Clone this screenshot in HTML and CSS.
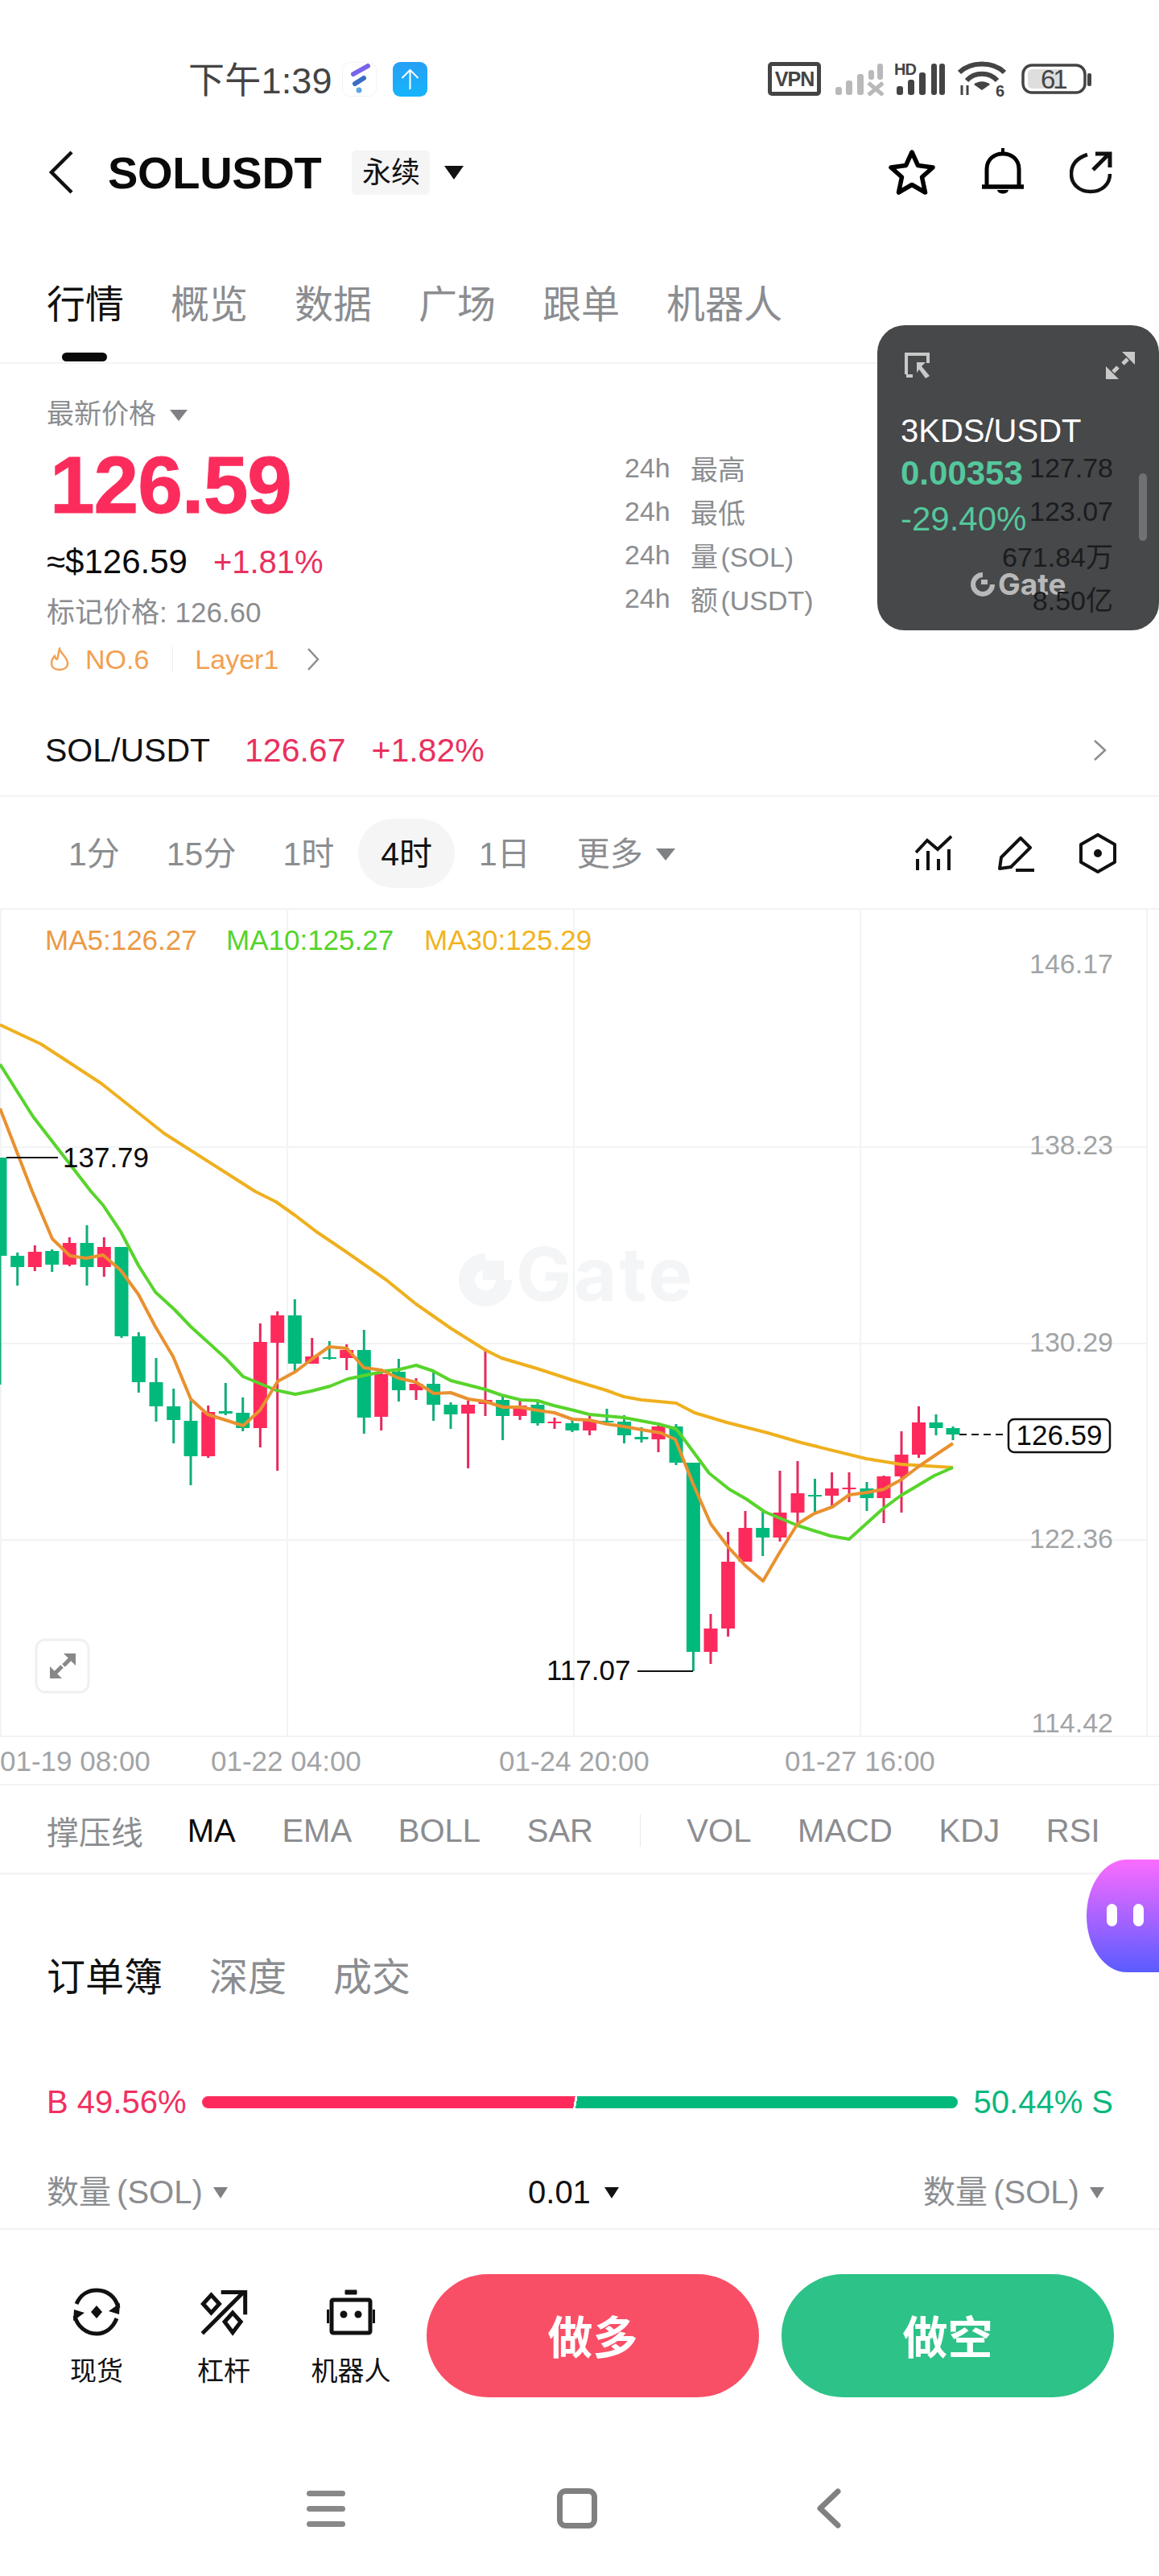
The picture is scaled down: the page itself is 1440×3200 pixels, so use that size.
FILE: index.html
```html
<!DOCTYPE html>
<html lang="zh-CN">
<head>
    <meta charset="UTF-8">
    <meta name="viewport" content="width=device-width, initial-scale=1.0">
    <title>SOLUSDT</title>
    <link rel="stylesheet" href="styles.css">
</head>
<body>
<div class="page">

    <div class="status-bar">
        <span class="clock">下午1:39</span>
        <svg class="app-icon" width="43" height="43" viewBox="0 0 43 43">
            <rect x="0.5" y="0.5" width="42" height="42" rx="9" fill="#fff" stroke="#f2f2f2"/>
            <path d="M14 15 L32 5" stroke="#7a63ea" stroke-width="6" stroke-linecap="round"/>
            <path d="M16 27 L27 20" stroke="#3d6cc4" stroke-width="6" stroke-linecap="round"/>
            <circle cx="21" cy="35" r="3.5" fill="#62a4e4"/>
        </svg>
        <svg class="app-icon second" width="43" height="43" viewBox="0 0 43 43">
            <defs>
                <linearGradient id="blueUp" x1="0" y1="0" x2="0" y2="1">
                    <stop offset="0" stop-color="#26a0f5"/>
                    <stop offset="1" stop-color="#16b4fb"/>
                </linearGradient>
            </defs>
            <rect width="43" height="43" rx="9" fill="url(#blueUp)"/>
            <path d="M21.500 34 V10 M11.500 20 L21.500 10 L31.500 20" fill="none" stroke="#fff" stroke-width="2"/>
        </svg>

        <div class="status-right">
            <span class="vpn">VPN</span>
            <svg class="signal-off" width="60" height="42" viewBox="0 0 60 42" fill="#b9b9b9">
                <rect x="0" y="31" width="8" height="10" rx="3"/>
                <rect x="13" y="23" width="8" height="18" rx="3"/>
                <rect x="27" y="15" width="8" height="26" rx="3"/>
                <rect x="41" y="10" width="7" height="12" rx="3"/>
                <rect x="52" y="2" width="7" height="20" rx="3"/>
                <path d="M41 26 L59 41 M59 26 L41 41" stroke="#b9b9b9" stroke-width="5"/>
            </svg>
            <svg class="signal-hd" width="63" height="46" viewBox="0 -4 63 46" fill="#444">
                <text class="hd-text" x="0" y="16">HD</text>
                <rect x="3" y="30" width="8" height="11" rx="3"/>
                <rect x="17" y="22" width="8" height="19" rx="3"/>
                <rect x="31" y="13" width="8" height="28" rx="3"/>
                <rect x="46" y="2" width="7" height="39" rx="3"/>
                <rect x="56" y="2" width="7" height="39" rx="3"/>
            </svg>
            <svg class="wifi" width="60" height="50" viewBox="0 0 60 50" fill="none" stroke="#444" stroke-width="6">
                <path d="M2 15 C16 1 44 1 58 15"/>
                <path d="M11 25 C21 14 39 14 49 25"/>
                <path d="M30 37 L20 30 C25 25 35 25 40 30 Z" fill="#444" stroke="none"/>
                <path d="M5 31 V43 M12 31 V43" stroke-width="3"/>
                <text class="wifi-six" x="47" y="45">6</text>
            </svg>
            <svg class="battery" width="88" height="38" viewBox="0 0 88 38">
                <rect x="2" y="2" width="77" height="34" rx="11" fill="#fff" stroke="#444" stroke-width="3.500"/>
                <path d="M14 7 H51 V31 H14 C10 31 8 29 8 25 V13 C8 9 10 7 14 7 Z" fill="#dedede"/>
                <rect x="82" y="12" width="5" height="16" rx="2" fill="#444"/>
                <text class="battery-text" x="24" y="31">61</text>
            </svg>
        </div>
    </div>

    <div class="top-bar">
        <svg class="back" width="30" height="54" viewBox="0 0 30 54" fill="none" stroke="#111" stroke-width="4.500">
            <path d="M28 2 L3 27 L28 52"/>
        </svg>
        <span class="symbol">SOLUSDT</span>
        <span class="chip">永续</span>
        <span class="tri tri-lg"></span>
        <div class="top-icons">
            <svg width="60" height="58" viewBox="0 0 60 58" fill="none" stroke="#000" stroke-width="5.500" stroke-linejoin="round">
                <path d="M30 4 L37.500 20.500 L56 23 L42.500 35 L46.500 54 L30 44.500 L13.500 54 L17.500 35 L4 23 L22.500 20.500 Z"/>
            </svg>
            <svg width="52" height="60" viewBox="0 0 52 60" fill="none" stroke="#000" stroke-width="5">
                <path d="M6 48 V26 C6 14 15 7 26 7 C37 7 46 14 46 26 V48"/>
                <path d="M0 48 H52" stroke-width="5.500"/>
                <path d="M26 0 V8" stroke-width="4"/>
                <path d="M19 52 H33 C32 58 20 58 19 52 Z" fill="#000" stroke="none"/>
            </svg>
            <svg width="54" height="54" viewBox="0 0 54 54" fill="none" stroke="#111" stroke-width="4.500">
                <path d="M22 5 C10 9 2 17 2 29 C2 42 12 51 26 51 C40 51 50 42 50 29"/>
                <path d="M29 24 L48 5" stroke-width="5"/>
                <path d="M32 4 H50 V21" stroke-width="5"/>
            </svg>
        </div>
    </div>

    <div class="main-tabs">
        <span class="tab active">行情</span>
        <span class="tab">概览</span>
        <span class="tab">数据</span>
        <span class="tab">广场</span>
        <span class="tab">跟单</span>
        <span class="tab">机器人</span>
    </div>

    <div class="float-window">
        <div class="float-icons">
            <svg width="32" height="34" viewBox="0 0 32 34" fill="none" stroke="#c9c9c9" stroke-width="4">
                <path d="M2 28 V3 H29 V14"/>
                <path d="M2 30 H10" />
                <path d="M15 13 H26 L21 18 L31 30 L26 33 L18 22 L15 26 Z" fill="#c9c9c9" stroke="none"/>
            </svg>
            <svg width="36" height="34" viewBox="0 0 36 34" fill="#c9c9c9" stroke="#c9c9c9" stroke-width="0">
                <path d="M20 0 H36 V16 Z M0 34 V18 L16 34 Z"/>
                <path d="M27 9 L21 15 M9 25 L15 19" stroke-width="5"/>
            </svg>
        </div>
        <div class="float-pair">3KDS/USDT</div>
        <div class="float-price">0.00353</div>
        <div class="float-change">-29.40%</div>
        <div class="float-logo">
            <svg width="34" height="30" viewBox="0 0 34 30" fill="none" stroke="#b9b9b9" stroke-width="6">
                <path d="M17 3 A 12 12 0 1 0 29 15"/>
                <rect x="15" y="9" width="8" height="6" fill="#b9b9b9" stroke="none"/>
            </svg>
            <span>Gate</span>
        </div>
        <div class="float-scroll"></div>
    </div>

    <div class="price-panel">
        <div class="price-left">
            <div class="price-label">最新价格 <span class="tri tri-gray"></span></div>
            <div class="price-big">126.59</div>
            <div class="price-usd">≈$126.59<span class="price-pct">+1.81%</span></div>
            <div class="price-mark">标记价格: 126.60</div>
            <div class="price-tags">
                <svg width="24" height="30" viewBox="0 0 24 30" fill="none" stroke="#f2a35a" stroke-width="2.500">
                    <path d="M12 2 C13 8 22 12 22 20 C22 25 18 28 12 28 C6 28 2 25 2 20 C2 16 4 13 6 11 C7 14 8 15 9 15 C11 12 10 6 12 2 Z"/>
                </svg>
                <span class="tag-no">NO.6</span>
                <span class="tag-sep"></span>
                <span class="tag-layer">Layer1</span>
                <svg width="16" height="28" viewBox="0 0 16 28" fill="none" stroke="#8b8d90" stroke-width="2.500">
                    <path d="M2 1 L14 14 L2 27"/>
                </svg>
            </div>
        </div>
        <div class="stats">
            <span>24h</span><span>最高</span><span class="stat-value">127.78</span>
            <span>24h</span><span>最低</span><span class="stat-value">123.07</span>
            <span>24h</span><span>量 (SOL)</span><span class="stat-value">671.84万</span>
            <span>24h</span><span>额 (USDT)</span><span class="stat-value">8.50亿</span>
        </div>
    </div>

    <div class="pair-row">
        <span class="pair-name">SOL/USDT</span>
        <span class="pair-price">126.67</span>
        <span class="pair-pct">+1.82%</span>
        <svg class="pair-arrow" width="17" height="28" viewBox="0 0 17 28" fill="none" stroke="#8b8d90" stroke-width="2.500">
            <path d="M2 2 L15 14 L2 26"/>
        </svg>
    </div>

    <div class="period-row">
        <span class="period">1分</span>
        <span class="period">15分</span>
        <span class="period">1时</span>
        <span class="period current">4时</span>
        <span class="period">1日</span>
        <span class="period">更多</span>
        <span class="tri tri-gray tri-more"></span>
        <div class="period-icons">
            <svg width="46" height="46" viewBox="0 0 46 46" fill="none" stroke="#111" stroke-width="4">
                <path d="M1 22 L15 7 L28 18 L45 2"/>
                <path d="M3 44 V30 M16 44 V20 M29 44 V30 M42 44 V18"/>
            </svg>
            <svg width="48" height="46" viewBox="0 0 48 46" fill="none" stroke="#111" stroke-width="4" stroke-linejoin="round">
                <path d="M4 42 L6 28 L30 4 L42 16 L18 40 Z"/>
                <path d="M24 44 H47"/>
            </svg>
            <svg width="46" height="50" viewBox="0 0 46 50" fill="none" stroke="#111" stroke-width="4" stroke-linejoin="round">
                <path d="M23 2 L44 14 V36 L23 48 L2 36 V14 Z"/>
                <circle cx="23" cy="25" r="5" fill="#111" stroke="none"/>
            </svg>
        </div>
    </div>

    <svg class="chart" width="1440" height="1086" viewBox="0 1130 1440 1086">
        <!-- grid -->
        <path class="grid" d="M0 1425H1425M0 1669H1425M0 1913H1425M0 2157H1440"/>
        <path class="grid" d="M1 1130V2157M357 1130V2157M713 1130V2157M1069 1130V2157M1425 1130V2157"/>

        <!-- watermark -->
        <g class="mark">
            <path d="M603 1567 A 23 23 0 1 0 626 1590" fill="none" stroke="#f4f5f6" stroke-width="20"/>
            <rect x="600" y="1566" width="26" height="24" fill="#f4f5f6"/>
            <text class="mark-text" x="641" y="1616">Gate</text>
        </g>

        <text class="ma ma5" x="56" y="1180">MA5:126.27</text>
        <text class="ma ma10" x="281" y="1180">MA10:125.27</text>
        <text class="ma ma30" x="527" y="1180">MA30:125.29</text>

        <!-- candles -->
        <path class="wick-up" d="M0 1438V1720M21.700 1556V1597M64.700 1552V1580M108 1522V1597M151 1549V1662M172.300 1655V1730M194 1687V1766M215.700 1725V1793M237 1740V1845M280.300 1718V1758M301.700 1736V1778M366.300 1614V1703M409.300 1666V1689M452.300 1652V1781M495.400 1688V1741M538.600 1704V1765M560 1742V1775M624.600 1735V1789M668 1742V1771M711 1761V1779M754 1750V1767M775.500 1758V1793M797 1773V1792M840 1769V1820M861.400 1817V2076M947.700 1877V1933M1012.500 1837V1880M1077 1841V1877M1163 1757V1783M1184 1772V1789"/>
        <path class="body-up" d="M0 1438V1560M21.700 1560V1574M64.700 1554V1571M108 1544V1574M151 1549V1660M172.300 1660V1717M194 1717V1747M215.700 1747V1764M237 1765V1809M280.300 1753V1756M301.700 1755V1774M366.300 1634V1694M409.300 1686V1688M452.300 1677V1761M495.400 1704V1727M538.600 1719V1745M560 1745V1757M624.600 1739V1759M668 1745V1768M711 1768V1777M754 1765V1767M775.500 1766V1783M797 1785V1788M840 1772V1817M861.400 1817V2052M947.700 1898V1910M1012.500 1857V1859M1077 1849V1861M1163 1767V1774M1184 1774V1782"/>
        <path class="wick-down" d="M43.300 1547V1579M86.300 1537V1573M129.300 1537V1586M258.700 1746V1811M323.300 1644V1798M344.700 1629V1827M387.700 1662V1694M430.700 1670V1702M473.700 1700V1777M517 1712V1739M581.600 1740V1824M603 1675V1759M646 1740V1764M689 1761V1775M732.600 1758V1783M818 1767V1804M883 2005V2067M904.600 1903V2033M926 1877V1940M969 1827V1915M991 1815V1893M1033.600 1829V1872M1055 1829V1866M1098 1833V1892M1120 1778V1879M1141.500 1747V1811"/>
        <path class="body-down" d="M43.300 1555V1574M86.300 1544V1571M129.300 1549V1574M258.700 1754V1809M323.300 1667V1774M344.700 1634V1668M387.700 1685V1694M430.700 1677V1687M473.700 1707V1760M517 1719V1727M581.600 1745V1756M603 1739V1744M646 1746V1759M689 1766V1768M732.600 1765V1777M818 1772V1788M883 2023V2052M904.600 1940V2023M926 1898V1940M969 1879V1910M991 1855V1879M1033.600 1849V1858M1055 1848V1850M1098 1834V1861M1120 1807V1834M1141.500 1767V1807"/>

        <!-- moving averages -->
        <polyline class="line-ma30" points="0,1273 51,1297 126,1346 204,1408 317,1480 343,1493 367,1510 393,1530 430,1555 480,1590 517,1620 560,1650 603,1677 623,1687 667,1700 713,1715 753,1727 775,1735 797,1739 840,1743 863,1755 903,1767 954,1780 995,1792 1076,1812 1119,1819 1184,1823"/>
        <polyline class="line-ma10" points="0,1322 41,1387 113,1480 128,1497 150,1530 172,1572 193,1605 217,1627 237,1648 280,1687 302,1710 343,1727 367,1732 387,1728 410,1722 432,1713 480,1703 497,1701 517,1696 538,1703 560,1715 603,1726 623,1733 647,1739 668,1740 688,1746 713,1752 732,1757 775,1761 818,1769 840,1775 844,1780 881,1830 906,1850 927,1862 950,1878 991,1895 1032,1908 1055,1912 1096,1875 1119,1858 1161,1833 1184,1823"/>
        <polyline class="line-ma5" points="0,1377 40,1480 65,1539 87,1560 107,1563 128,1559 150,1578 172,1608 193,1648 215,1685 237,1738 258,1757 280,1764 302,1771 323,1752 345,1716 367,1704 388,1688 409,1673 431,1675 452,1699 474,1702 495,1712 517,1717 539,1731 560,1730 582,1738 603,1741 625,1748 646,1748 668,1752 689,1755 711,1763 732,1764 754,1769 775,1772 797,1776 821,1780 839,1788 861,1843 883,1893 905,1922 926,1945 948,1964 969,1928 991,1893 1012,1880 1034,1872 1055,1857 1077,1854 1098,1850 1120,1838 1141,1822 1163,1807 1184,1793"/>

        <!-- price scale -->
        <text class="axis" x="1383" y="1209" text-anchor="end">146.17</text>
        <text class="axis" x="1383" y="1434" text-anchor="end">138.23</text>
        <text class="axis" x="1383" y="1679" text-anchor="end">130.29</text>
        <text class="axis" x="1383" y="1923" text-anchor="end">122.36</text>
        <text class="axis" x="1383" y="2152" text-anchor="end">114.42</text>

        <!-- high / low / last -->
        <path class="callout" d="M8 1438H72"/>
        <text class="callout-text" x="78" y="1450">137.79</text>
        <path class="callout" d="M792 2076H861"/>
        <text class="callout-text" x="679" y="2087">117.07</text>
        <path class="last-line" d="M1192 1782H1252"/>
        <rect class="last-box" x="1253" y="1763" width="126" height="41" rx="7"/>
        <text class="callout-text" x="1316" y="1795" text-anchor="middle">126.59</text>

        <!-- expand button -->
        <rect class="expand-box" x="45" y="2037" width="65" height="65" rx="11"/>
        <path class="expand-head" d="M79 2054H94V2069ZM62 2070V2085H77Z"/>
        <path class="expand-stem" d="M87 2061L79 2069M69 2078L77 2070"/>

        <!-- time axis -->
        <text class="axis date" x="0" y="2200">01-19 08:00</text>
        <text class="axis date" x="262" y="2200">01-22 04:00</text>
        <text class="axis date" x="620" y="2200">01-24 20:00</text>
        <text class="axis date" x="975" y="2200">01-27 16:00</text>
    </svg>

    <div class="indicator-row">
        <span class="indicator-first">撑压线</span>
        <span class="on">MA</span>
        <span>EMA</span>
        <span>BOLL</span>
        <span>SAR</span>
        <span class="indicator-sep"></span>
        <span>VOL</span>
        <span>MACD</span>
        <span>KDJ</span>
        <span>RSI</span>
    </div>

    <div class="bubble">
        <span class="eye"></span>
        <span class="eye"></span>
    </div>

    <div class="book">
        <div class="book-tabs">
            <span class="on">订单簿</span>
            <span>深度</span>
            <span>成交</span>
        </div>
        <div class="ratio-row">
            <span class="ratio-buy">B 49.56%</span>
            <div class="ratio-bar"></div>
            <span class="ratio-sell">50.44% S</span>
        </div>
        <div class="qty-row">
            <span class="qty">数量 (SOL) <span class="tri tri-gray tri-sm"></span></span>
            <span class="qty qty-mid">0.01 <span class="tri tri-sm"></span></span>
            <span class="qty">数量 (SOL) <span class="tri tri-gray tri-sm"></span></span>
        </div>
    </div>

    <div class="actions">
        <div class="action-item">
            <svg width="60" height="60" viewBox="0 0 60 60" fill="none" stroke="#111" stroke-width="5">
                <path d="M5 20 C10 8 20 3 30 3 C43 3 54 11 57 25"/>
                <path d="M55 38 C50 50 41 57 30 57 C17 57 6 48 3 35"/>
                <path d="M45 29 L58 33 L59 19 Z M15 31 L2 27 L1 41 Z" fill="#111" stroke="none"/>
                <path d="M30 22 L37 30 L30 38 L23 30 Z" fill="#111" stroke="none"/>
            </svg>
            <span>现货</span>
        </div>
        <div class="action-item">
            <svg width="60" height="60" viewBox="0 0 54 54" fill="none" stroke="#111" stroke-width="4.500">
                <path d="M3 51 L49 5"/>
                <path d="M24 5 H51 V30"/>
                <path d="M13 8 L22 18 L13 28 L4 18 Z"/>
                <path d="M37 28 L46 38 L37 50 L28 38 Z"/>
            </svg>
            <span>杠杆</span>
        </div>
        <div class="action-item">
            <svg width="60" height="60" viewBox="0 0 60 60" fill="none" stroke="#111" stroke-width="5">
                <path d="M23 3 H37 V8 H23 Z" fill="#111" stroke="#111" stroke-width="1"/>
                <rect x="6" y="15" width="48" height="41" rx="2"/>
                <path d="M1 27 V44 M59 27 V44" stroke-width="4"/>
                <circle cx="21" cy="33" r="4.500" fill="#111" stroke="none"/>
                <circle cx="39" cy="33" r="4.500" fill="#111" stroke="none"/>
            </svg>
            <span>机器人</span>
        </div>
        <button class="trade long">做多</button>
        <button class="trade short">做空</button>
    </div>

    <div class="nav-bar">
        <div class="nav-menu"><span></span><span></span><span></span></div>
        <div class="nav-home"></div>
        <svg width="31" height="50" viewBox="0 0 31 50" fill="none" stroke="#808080" stroke-width="7" stroke-linecap="round" stroke-linejoin="round">
            <path d="M27 4 L5 25 L27 46"/>
        </svg>
    </div>

</div>
</body>
</html>
```
FILE: styles.css
```css
* {
    box-sizing: border-box;
}

body {
    margin: 0;
    background-color: #fff;
    font-family: "Liberation Sans", "Noto Sans CJK SC", sans-serif;
    color: #111;
}

.page {
    position: relative;
    width: 1440px;
    height: 3200px;
    overflow: hidden;
}

svg {
    display: block;
    flex: none;
}

/* triangles */
.tri {
    display: inline-block;
    width: 0;
    height: 0;
    border-left: 12px solid transparent;
    border-right: 12px solid transparent;
    border-top: 17px solid #111;
}

.tri-gray {
    border-top-color: #7f8184;
}

.tri-sm {
    border-left-width: 9px;
    border-right-width: 9px;
    border-top-width: 14px;
}

/* status bar */
.status-bar {
    display: flex;
    align-items: center;
    height: 150px;
    padding: 46px 83px 0 234px;
}

.clock {
    margin-top: -3px;
    font-size: 45px;
    color: #444;
    letter-spacing: 0.2px;
    width: 191px;
}

.app-icon.second {
    margin-left: 20px;
}

.status-right {
    display: flex;
    align-items: center;
    margin-left: auto;
}

.vpn {
    width: 66px;
    height: 42px;
    border: 5px solid #444;
    border-radius: 5px;
    font-size: 25px;
    font-weight: bold;
    line-height: 32px;
    letter-spacing: -1px;
    text-align: center;
    color: #444;
}

.signal-off {
    margin-left: 18px;
}

.signal-hd {
    margin: -4px 0 0 13px;
}

.hd-text {
    font-size: 20px;
    font-weight: bold;
    letter-spacing: -1px;
}

.wifi {
    margin: 4px 0 0 16px;
}

.wifi-six {
    font-size: 20px;
    font-weight: bold;
    fill: #444;
    stroke: none;
}

.battery {
    margin-left: 19px;
}

.battery-text {
    font-size: 33px;
    letter-spacing: -3px;
    fill: #444;
}

/* header */
.top-bar {
    display: flex;
    align-items: center;
    height: 128px;
    padding-left: 61px;
}

.symbol {
    margin-left: 43px;
    font-size: 56px;
    font-weight: bold;
    letter-spacing: -0.3px;
    color: #0a0a0a;
}

.chip {
    margin-left: 38px;
    width: 97px;
    height: 55px;
    border-radius: 5px;
    background-color: #f5f5f5;
    font-size: 36px;
    line-height: 55px;
    text-align: center;
}

.tri-lg {
    margin-left: 18px;
}

.top-icons {
    display: flex;
    align-items: center;
    gap: 57px;
    margin-left: auto;
    padding-right: 57px;
}

/* main tabs */
.main-tabs {
    display: flex;
    gap: 58px;
    height: 174px;
    padding: 71px 0 0 58px;
    border-bottom: 2px solid #f3f3f3;
}

.tab {
    position: relative;
    height: 60px;
    font-size: 48px;
    line-height: 60px;
    color: #8b8d90;
}

.tab.active {
    color: #111;
}

.tab.active::after {
    content: "";
    position: absolute;
    left: 19px;
    top: 89px;
    width: 56px;
    height: 11px;
    border-radius: 6px;
    background-color: #0a0a0a;
}

/* floating ticker */
.float-window {
    position: absolute;
    left: 1090px;
    top: 404px;
    z-index: 1;
    width: 350px;
    height: 379px;
    padding: 33px 0 0 29px;
    border-radius: 34px;
    background-color: #46484a;
}

.float-icons {
    display: flex;
    justify-content: space-between;
    width: 286px;
    margin-left: 5px;
}

.float-pair {
    margin-top: 39px;
    font-size: 40px;
    line-height: 50px;
    color: #fff;
}

.float-price {
    margin-top: 3px;
    font-size: 42px;
    font-weight: bold;
    line-height: 50px;
    color: #55c79c;
}

.float-change {
    margin-top: 7px;
    font-size: 42px;
    line-height: 50px;
    color: #55c79c;
}

.float-logo {
    display: flex;
    align-items: center;
    gap: 2px;
    margin: 41px 0 0 85px;
}

.float-logo span {
    font-family: Inter, "Liberation Sans", sans-serif;
    font-size: 37px;
    font-weight: 700;
    line-height: 30px;
    color: #b9b9b9;
}

.float-scroll {
    position: absolute;
    left: 325px;
    top: 184px;
    width: 10px;
    height: 84px;
    border-radius: 5px;
    background-color: #6f7175;
}

/* price block */
.price-panel {
    display: flex;
    height: 428px;
}

.price-left {
    width: 776px;
    padding: 40px 0 0 58px;
}

.price-label {
    font-size: 34px;
    line-height: 44px;
    color: #8b8d90;
}

.price-label .tri {
    margin-left: 8px;
    vertical-align: 3px;
    border-left-width: 11px;
    border-right-width: 11px;
    border-top-width: 14px;
}

.price-big {
    margin: 10px 0 0 4px;
    font-size: 100px;
    font-weight: bold;
    line-height: 112px;
    letter-spacing: -1px;
    color: #fb2c5c;
    -webkit-text-stroke: 1px #fb2c5c;
}

.price-usd {
    margin-top: 15px;
    font-size: 42px;
    line-height: 50px;
    color: #0a0a0a;
}

.price-pct {
    margin-left: 32px;
    font-size: 40px;
    color: #e9305e;
}

.price-mark {
    margin-top: 16px;
    font-size: 35px;
    line-height: 44px;
    color: #8b8d90;
}

.price-tags {
    display: flex;
    align-items: center;
    height: 44px;
    margin-top: 14px;
    padding-left: 4px;
    font-size: 34px;
    color: #f2a050;
}

.tag-no {
    margin-left: 20px;
}

.tag-sep {
    width: 1px;
    height: 34px;
    margin: 0 27px 0 29px;
    background-color: #eee;
}

.price-tags svg:last-child {
    margin-left: 35px;
}

.stats {
    position: relative;
    z-index: 2;
    display: grid;
    grid-template-columns: 82px 1fr auto;
    grid-auto-rows: 54px;
    align-items: center;
    width: 607px;
    height: 319px;
    padding-top: 102px;
    font-size: 34px;
    word-spacing: -6px;
    color: #8b8d90;
}

.stat-value {
    text-align: right;
    color: #1b1c1e;
}

/* spot pair */
.pair-row {
    display: flex;
    align-items: center;
    height: 110px;
    padding: 0 65px 4px 56px;
    border-bottom: 2px solid #f3f3f3;
    font-size: 41px;
}

.pair-price {
    margin-left: 43px;
    color: #e9305e;
}

.pair-pct {
    margin-left: 32px;
    color: #e9305e;
}

.pair-arrow {
    margin-left: auto;
}

/* chart periods */
.period-row {
    display: flex;
    align-items: center;
    gap: 2px;
    height: 140px;
    padding: 2px 53px 0 57px;
    border-bottom: 2px solid #f3f3f3;
}

.period {
    height: 86px;
    padding: 0 28px;
    border-radius: 43px;
    font-size: 41px;
    line-height: 88px;
    color: #8b8d90;
}

.period.current {
    background-color: #f5f5f5;
    color: #111;
}

.tri-more {
    margin: 2px 0 0 -14px;
    border-left-width: 12px;
    border-right-width: 12px;
    border-top-width: 15px;
}

.period-icons {
    display: flex;
    align-items: center;
    gap: 55px;
    margin-left: auto;
}

/* chart */
.chart {
    width: 1440px;
    height: 1086px;
}

.grid {
    fill: none;
    stroke: #f2f3f4;
    stroke-width: 2;
}

.mark-text {
    font-family: Inter, "Liberation Sans", sans-serif;
    font-size: 92px;
    font-weight: 700;
    letter-spacing: 3px;
    fill: #f4f5f6;
}

.ma {
    font-size: 35px;
}

.ma5 {
    fill: #ec9a45;
}

.ma10 {
    fill: #55d42a;
}

.ma30 {
    fill: #f0b41f;
}

.wick-up,
.body-up,
.wick-down,
.body-down {
    fill: none;
}

.wick-up {
    stroke: #11ac7c;
    stroke-width: 3;
}

.body-up {
    stroke: #02b97c;
    stroke-width: 17;
}

.wick-down {
    stroke: #e5295c;
    stroke-width: 3;
}

.body-down {
    stroke: #fe2a5c;
    stroke-width: 17;
}

.line-ma5,
.line-ma10,
.line-ma30 {
    fill: none;
    stroke-width: 4;
    stroke-linejoin: round;
}

.line-ma5 {
    stroke: #e9912f;
}

.line-ma10 {
    stroke: #58d42c;
}

.line-ma30 {
    stroke: #efb01e;
}

.axis {
    font-size: 34px;
    fill: #a2a4a6;
}

.axis.date {
    font-size: 35px;
}

.callout {
    fill: none;
    stroke: #111;
    stroke-width: 2;
}

.callout-text {
    font-size: 35px;
    fill: #0a0a0a;
}

.last-line {
    fill: none;
    stroke: #111;
    stroke-width: 2;
    stroke-dasharray: 9 6;
}

.last-box {
    fill: #fff;
    stroke: #111;
    stroke-width: 2.500;
}

.expand-box {
    fill: #fff;
    stroke: #f0f0f0;
    stroke-width: 3;
}

.expand-head {
    fill: #888;
}

.expand-stem {
    fill: none;
    stroke: #888;
    stroke-width: 5;
}

/* indicators */
.indicator-row {
    display: flex;
    align-items: center;
    gap: 57.700px;
    height: 113px;
    padding: 4px 0 0 58px;
    border-top: 2px solid #f3f3f3;
    border-bottom: 3px solid #f5f5f5;
    font-size: 40px;
    color: #8b8d90;
}

.indicator-row .on {
    color: #0a0a0a;
}

.indicator-first {
    margin-right: -3px;
}

.indicator-sep {
    width: 1px;
    height: 40px;
    background-color: #e8e8e8;
}

/* assistant bubble */
.bubble {
    position: absolute;
    left: 1350px;
    top: 2310px;
    z-index: 3;
    display: flex;
    align-items: center;
    gap: 20px;
    width: 100px;
    height: 140px;
    padding-left: 25px;
    border-radius: 50% 0 0 50% / 50% 0 0 50%;
    background-image: linear-gradient(#fb6bff, #5a5cff);
}

.eye {
    width: 13px;
    height: 28px;
    border-radius: 7px;
    background-color: #fff;
    margin-top: -2px;
}

/* order book */
.book {
    height: 441px;
    padding: 98px 57px 0 58px;
    border-bottom: 2px solid #f3f3f3;
}

.book-tabs {
    display: flex;
    gap: 58px;
    font-size: 48px;
    line-height: 60px;
    color: #8b8d90;
}

.book-tabs .on {
    color: #111;
}

.ratio-row {
    display: flex;
    align-items: center;
    gap: 20px;
    margin-top: 99px;
    font-size: 40px;
    line-height: 50px;
}

.ratio-buy {
    color: #f1305f;
}

.ratio-sell {
    color: #08b87e;
}

.ratio-bar {
    flex: 1;
    height: 15px;
    border-radius: 8px;
    background-image: linear-gradient(100deg, #fe2a5c 0 49.250%, #fff 49.250% 49.550%, #02b97c 49.550%);
}

.qty-row {
    display: flex;
    justify-content: space-between;
    margin: 62px 11px 0 0;
}

.qty {
    font-size: 40px;
    line-height: 50px;
    word-spacing: -4px;
    color: #8b8d90;
}

.qty-mid {
    margin-left: -5px;
    word-spacing: 0;
    color: #111;
}

.qty .tri {
    margin-left: 6px;
    vertical-align: 6px;
}

/* bottom actions */
.actions {
    display: flex;
    align-items: center;
    height: 228px;
    padding: 55px 0 20px 41px;
}

.action-item {
    display: flex;
    flex-direction: column;
    align-items: center;
    gap: 24px;
    width: 158px;
    padding-top: 4px;
    font-size: 33px;
    line-height: 40px;
}

.trade {
    width: 413px;
    height: 153px;
    padding-bottom: 5px;
    border: none;
    border-radius: 77px;
    font-family: inherit;
    font-size: 56px;
    font-weight: bold;
    color: #fff;
}

.long {
    margin-left: 15px;
    background-color: #f94f66;
}

.short {
    margin-left: 28px;
    background-color: #2dc287;
}

/* android nav */
.nav-bar {
    display: flex;
    align-items: center;
    height: 200px;
    padding: 36px 0 0 381px;
}

.nav-menu {
    display: flex;
    flex-direction: column;
    gap: 12px;
    width: 48px;
}

.nav-menu span {
    height: 7px;
    border-radius: 4px;
    background-color: #888;
}

.nav-home {
    width: 50px;
    height: 50px;
    margin: 0 272px 0 263px;
    border: 7px solid #808080;
    border-radius: 11px;
}
```
